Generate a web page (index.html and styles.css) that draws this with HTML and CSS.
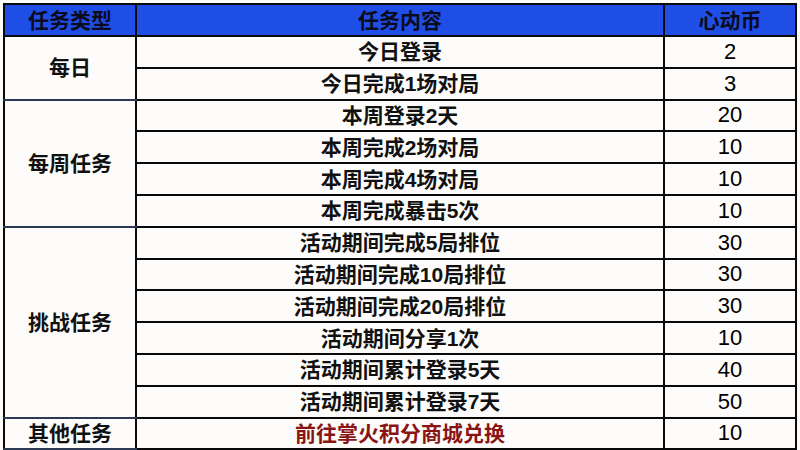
FILE: index.html
```html
<!DOCTYPE html>
<html lang="zh">
<head>
<meta charset="utf-8">
<link rel="stylesheet" href="styles.css">
</head>
<body>
<div class="sheet">
<table class="tasks">
  <colgroup><col class="c1"><col class="c2"><col class="c3"></colgroup>
  <thead>
    <tr class="head"><th>任务类型</th><th>任务内容</th><th>心动币</th></tr>
  </thead>
  <tbody>
    <tr><td rowspan="2" class="type">每日</td><td>今日登录</td><td class="num">2</td></tr>
    <tr><td>今日完成1场对局</td><td class="num">3</td></tr>
    <tr><td rowspan="4" class="type">每周任务</td><td>本周登录2天</td><td class="num">20</td></tr>
    <tr><td>本周完成2场对局</td><td class="num">10</td></tr>
    <tr><td>本周完成4场对局</td><td class="num">10</td></tr>
    <tr><td>本周完成暴击5次</td><td class="num">10</td></tr>
    <tr><td rowspan="6" class="type">挑战任务</td><td>活动期间完成5局排位</td><td class="num">30</td></tr>
    <tr><td>活动期间完成10局排位</td><td class="num">30</td></tr>
    <tr><td>活动期间完成20局排位</td><td class="num">30</td></tr>
    <tr><td>活动期间分享1次</td><td class="num">10</td></tr>
    <tr><td>活动期间累计登录5天</td><td class="num">40</td></tr>
    <tr><td>活动期间累计登录7天</td><td class="num">50</td></tr>
    <tr><td class="type">其他任务</td><td class="link">前往掌火积分商城兑换</td><td class="num">10</td></tr>
  </tbody>
</table>
</div>
</body>
</html>
```

FILE: styles.css
```css
html, body {
  margin: 0;
  padding: 0;
  background: #fdfcfa;
}
.sheet {
  width: 800px;
  height: 450px;
  padding: 3px 0 0 3px;
  box-sizing: border-box;
  background-color: #fdfcfa;
}
.tasks {
  border-collapse: collapse;
  width: 792px;
  height: 445px;
  table-layout: fixed;
  font-family: "Liberation Sans", "Noto Sans CJK SC", sans-serif;
  font-size: 21px;
  color: #111;
}
.c1 { width: 132px; }
.c2 { width: 528px; }
.c3 { width: 132px; }
.tasks th, .tasks td {
  border: 2px solid #0a0a0a;
  padding: 0;
  text-align: center;
  vertical-align: middle;
  line-height: 1;
  font-weight: 700;
}
.tasks .head th {
  background: #1f4ee6;
  color: #0b0b20;
  height: 30px;
}
.tasks tbody tr { height: 31.8px; }
.tasks td.type { border-bottom-color: #2b3a52; }
.tasks td.link { color: #8a1414; }
.tasks td.num {
  font-weight: 400;
  font-size: 22px;
  color: #000;
}
```
